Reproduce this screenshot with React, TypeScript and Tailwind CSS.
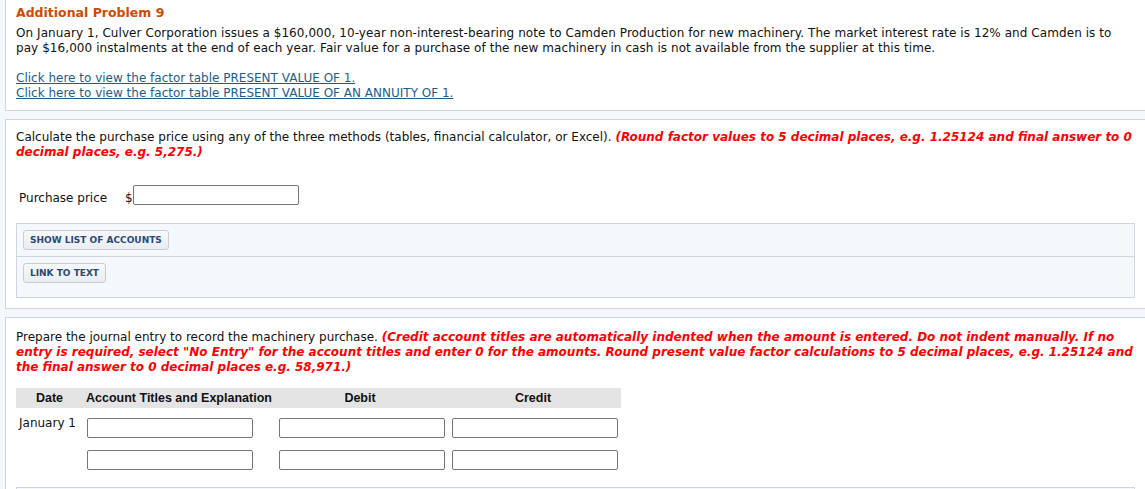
import React from "react"

const inputCls = "block h-[20px] w-[166px] rounded-[2px] border border-[#767676] bg-white"

function ToolButton({ label }: { label: string }) {
  return (
    <button className="h-[20px] rounded-[3px] border border-[#c6cdd7] bg-gradient-to-b from-[#f7f8fa] to-[#e9edf2] px-[6px] text-[9px] font-bold leading-[18px] text-[#2b4a72]">
      {label}
    </button>
  )
}

function ToolBox() {
  return (
    <div className="w-[1119px] border border-[#cdd5df] bg-[#f5f8fb]">
      <div className="border-b border-[#cdd5df] px-[6px] py-[6px]">
        <ToolButton label="SHOW LIST OF ACCOUNTS" />
      </div>
      <div className="px-[6px] pt-[6px] pb-[14px]">
        <ToolButton label="LINK TO TEXT" />
      </div>
    </div>
  )
}

export default function App() {
  return (
    <div className="h-[489px] w-full overflow-hidden bg-[#f5f8fb] font-['DejaVu_Sans',Verdana,sans-serif] text-[12px] leading-[15px] text-[#111]">
      <div className="ml-[5px] flex w-[1160px] flex-col gap-[8px]">
        {/* problem statement */}
        <div className="border-x border-b border-[#cdd5df] bg-white pt-[5px] pb-[9px] pl-[10px]">
          <h1 className="text-[12.5px] font-bold text-[#d04a02]">Additional Problem 9</h1>
          <p className="mt-[6px] whitespace-nowrap tracking-[0.07px]">
            On January 1, Culver Corporation issues a $160,000, 10-year non-interest-bearing note to Camden Production for new machinery. The market interest rate is 12% and Camden is to
            <br />
            pay $16,000 instalments at the end of each year. Fair value for a purchase of the new machinery in cash is not available from the supplier at this time.
          </p>
          <div className="mt-[15px] flex flex-col items-start">
            <a href="#" className="text-[#1b5d8c] underline">Click here to view the factor table PRESENT VALUE OF 1.</a>
            <a href="#" className="text-[#1b5d8c] underline">Click here to view the factor table PRESENT VALUE OF AN ANNUITY OF 1.</a>
          </div>
        </div>

        {/* purchase price */}
        <div className="border border-r-0 border-[#cdd5df] bg-white pt-[10px] pb-[10px] pl-[10px]">
          <p className="whitespace-nowrap">
            Calculate the purchase price using any of the three methods (tables, financial calculator, or Excel).{" "}
            <span className="font-bold italic text-[#ff0000]">(Round factor values to 5 decimal places, e.g. 1.25124 and final answer to 0</span>
            <br />
            <span className="font-bold italic text-[#ff0000]">decimal places, e.g. 5,275.)</span>
          </p>
          <div className="mt-[25px] flex h-[20px] items-start text-[12px]">
            <span className="mt-[6px] w-[106px] pl-[3px] leading-[15px]">Purchase price</span>
            <span className="mt-[6px] w-[11px] pl-[3px] leading-[15px]">$</span>
            <input className={inputCls} />
          </div>
          <div className="mt-[18px]">
            <ToolBox />
          </div>
        </div>

        {/* journal entry */}
        <div className="border border-r-0 border-[#cdd5df] bg-white pt-[12px] pb-[10px] pl-[10px]">
          <p className="whitespace-nowrap">
            Prepare the journal entry to record the machinery purchase.{" "}
            <span className="font-bold italic text-[#ff0000]">(Credit account titles are automatically indented when the amount is entered. Do not indent manually. If no</span>
            <br />
            <span className="font-bold italic text-[#ff0000]">entry is required, select "No Entry" for the account titles and enter 0 for the amounts. Round present value factor calculations to 5 decimal places, e.g. 1.25124 and</span>
            <br />
            <span className="font-bold italic text-[#ff0000]">the final answer to 0 decimal places e.g. 58,971.)</span>
          </p>
          <div className="mt-[13px] w-[605px]">
            <div className="grid h-[20px] grid-cols-[67px_192px_173px_173px] items-center bg-[#e4e4e4] font-['Liberation_Sans',Arial,sans-serif] text-[12.5px] font-bold text-[#111]">
              <span className="text-center">Date</span>
              <span className="pl-[3px]">Account Titles and Explanation</span>
              <span className="pr-[3px] text-center">Debit</span>
              <span className="pr-[3px] text-center">Credit</span>
            </div>
            <div className="mt-[10px] grid grid-cols-[67px_192px_173px_173px] gap-y-[12px] text-[12px]">
              <span className="-mt-[1px] pl-[3px] leading-[12px]">January 1</span>
              <div className="pl-[4px]"><input className={inputCls} /></div>
              <div className="pl-[4px]"><input className={inputCls} /></div>
              <div className="pl-[4px]"><input className={inputCls} /></div>
              <span />
              <div className="pl-[4px]"><input className={inputCls} /></div>
              <div className="pl-[4px]"><input className={inputCls} /></div>
              <div className="pl-[4px]"><input className={inputCls} /></div>
            </div>
          </div>
          {/* next tool box, only its top edge is in view */}
          <div className="mt-[17px] h-[74px] w-[1119px] border border-[#cdd5df] bg-[#f5f8fb]" />
        </div>
      </div>
    </div>
  )
}
